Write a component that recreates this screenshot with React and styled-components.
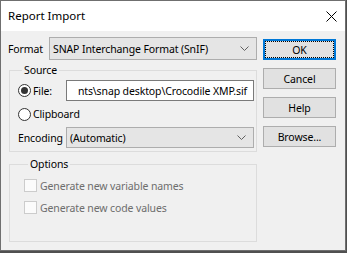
import React from "react";
import styled, { createGlobalStyle } from "styled-components";

const GlobalStyle = createGlobalStyle`
  html, body { margin: 0; padding: 0; }
  body {
    width: 347px;
    height: 253px;
    overflow: hidden;
    background: #505050;
    font-family: "Noto Sans", "Open Sans", sans-serif;
    font-size: 10.5px;
    letter-spacing: -0.12px;
    color: #000;
  }
  * { box-sizing: border-box; }
`;

const Window = styled.div`
  width: 346px;
  height: 251px;
  border: 1px solid #6f6f6f;
  background: #f0f0f0;
  display: flex;
  flex-direction: column;
`;

const TitleBar = styled.div`
  height: 30px;
  flex: none;
  background: #fff;
  display: flex;
  align-items: center;
  justify-content: space-between;
  padding: 0 8px 0 7px;
`;

const Title = styled.span`
  font-size: 11.5px;
  line-height: 16px;
  letter-spacing: 0;
`;

const CloseIcon = styled.svg`
  width: 11px;
  height: 11px;
  display: block;
  margin-top: 1px;
`;

const Body = styled.div`
  flex: 1;
  display: flex;
  gap: 6px;
  padding: 6px 0 0 7px;
`;

const LeftColumn = styled.div`
  width: 249px;
  display: flex;
  flex-direction: column;
`;

const ButtonColumn = styled.div`
  width: 73px;
  display: flex;
  flex-direction: column;
  gap: 8px;
  padding-top: 2px;
`;

const Row = styled.div`
  display: flex;
  align-items: center;
  height: ${(p) => p.$h}px;
  margin-top: ${(p) => p.$mt || 0}px;
`;

const Label = styled.span`
  width: ${(p) => p.$w}px;
  flex: none;
  white-space: nowrap;
`;

const Select = styled.div`
  width: ${(p) => p.$w}px;
  height: ${(p) => p.$h}px;
  flex: none;
  background: #e5e5e5;
  border: 1px solid #adadad;
  display: flex;
  align-items: center;
  justify-content: space-between;
  padding: 0 7px 0 3px;
  white-space: nowrap;
`;

const Chevron = styled.svg`
  width: 9px;
  height: 5px;
  display: block;
`;

const Group = styled.fieldset`
  margin: ${(p) => p.$mt}px 0 0 1px;
  padding: ${(p) => p.$pt}px 2px ${(p) => p.$pb}px ${(p) => p.$pl}px;
  border: 1px solid #dcdcdc;
  min-width: 0;
`;

const Legend = styled.legend`
  margin-left: 4px;
  padding: 0 2px;
  line-height: 16px;
`;

const RadioLabel = styled.label`
  width: 48px;
  flex: none;
  display: flex;
  align-items: center;
  gap: 2px;
`;

const RadioCircle = styled.span`
  width: 13px;
  height: 13px;
  flex: none;
  border-radius: 50%;
  border: 1px solid #333;
  background: #fff;
  display: flex;
  align-items: center;
  justify-content: center;
  &::after {
    content: "";
    width: 7px;
    height: 7px;
    border-radius: 50%;
    background: ${(p) => (p.$checked ? "#333" : "transparent")};
  }
`;

const TextBox = styled.div`
  width: 188px;
  height: 21px;
  flex: none;
  background: #fff;
  border: 1px solid #7a7a7a;
  display: flex;
  align-items: center;
  justify-content: flex-end;
  padding: 0 6px 0 5px;
  overflow: hidden;
  white-space: nowrap;
`;

const CheckRow = styled.div`
  display: flex;
  align-items: center;
  height: 13px;
  gap: 3px;
  color: #6d6d6d;
  margin-top: ${(p) => p.$mt || 0}px;
`;

const CheckBox = styled.span`
  width: 13px;
  height: 13px;
  flex: none;
  border: 1px solid #cccccc;
  background: #fbfbfb;
`;

const Button = styled.div`
  height: 21px;
  background: #e1e1e1;
  border: ${(p) => (p.$default ? "2px solid #0078d7" : "1px solid #adadad")};
  display: flex;
  align-items: center;
  justify-content: center;
  outline: ${(p) => (p.$default ? "1px dotted #000" : "none")};
  outline-offset: -3px;
`;

const ChevronIcon = () => (
  <Chevron viewBox="0 0 9 5">
    <polyline points="0.5,0.5 4.5,4.5 8.5,0.5" fill="none" stroke="#606060" strokeWidth="1" />
  </Chevron>
);

export default function App() {
  return (
    <>
      <GlobalStyle />
      <Window>
        <TitleBar>
          <Title>Report Import</Title>
          <CloseIcon viewBox="0 0 11 11">
            <path d="M0.5 0.5 L10.5 10.5 M10.5 0.5 L0.5 10.5" stroke="#000" strokeWidth="1" fill="none" />
          </CloseIcon>
        </TitleBar>
        <Body>
          <LeftColumn>
            <Row $h={23}>
              <Label $w={41}>Format</Label>
              <Select $w={208} $h={23}>
                <span>SNAP Interchange Format (SnIF)</span>
                <ChevronIcon />
              </Select>
            </Row>
            <Group $mt={2} $pt={2} $pb={3} $pl={8}>
              <Legend>Source</Legend>
              <Row $h={21}>
                <RadioLabel>
                  <RadioCircle $checked />
                  File:
                </RadioLabel>
                <TextBox>{"nts\\snap desktop\\Crocodile XMP.sif"}</TextBox>
              </Row>
              <Row $h={16} $mt={5}>
                <RadioLabel>
                  <RadioCircle />
                  Clipboard
                </RadioLabel>
              </Row>
              <Row $h={21} $mt={5}>
                <Label $w={48}>Encoding</Label>
                <Select $w={188} $h={21}>
                  <span>(Automatic)</span>
                  <ChevronIcon />
                </Select>
              </Row>
            </Group>
            <Group $mt={4} $pt={7} $pb={27} $pl={14}>
              <Legend>Options</Legend>
              <CheckRow>
                <CheckBox />
                Generate new variable names
              </CheckRow>
              <CheckRow $mt={9}>
                <CheckBox />
                Generate new code values
              </CheckRow>
            </Group>
          </LeftColumn>
          <ButtonColumn>
            <Button $default>OK</Button>
            <Button>Cancel</Button>
            <Button>Help</Button>
            <Button>Browse...</Button>
          </ButtonColumn>
        </Body>
      </Window>
    </>
  );
}
